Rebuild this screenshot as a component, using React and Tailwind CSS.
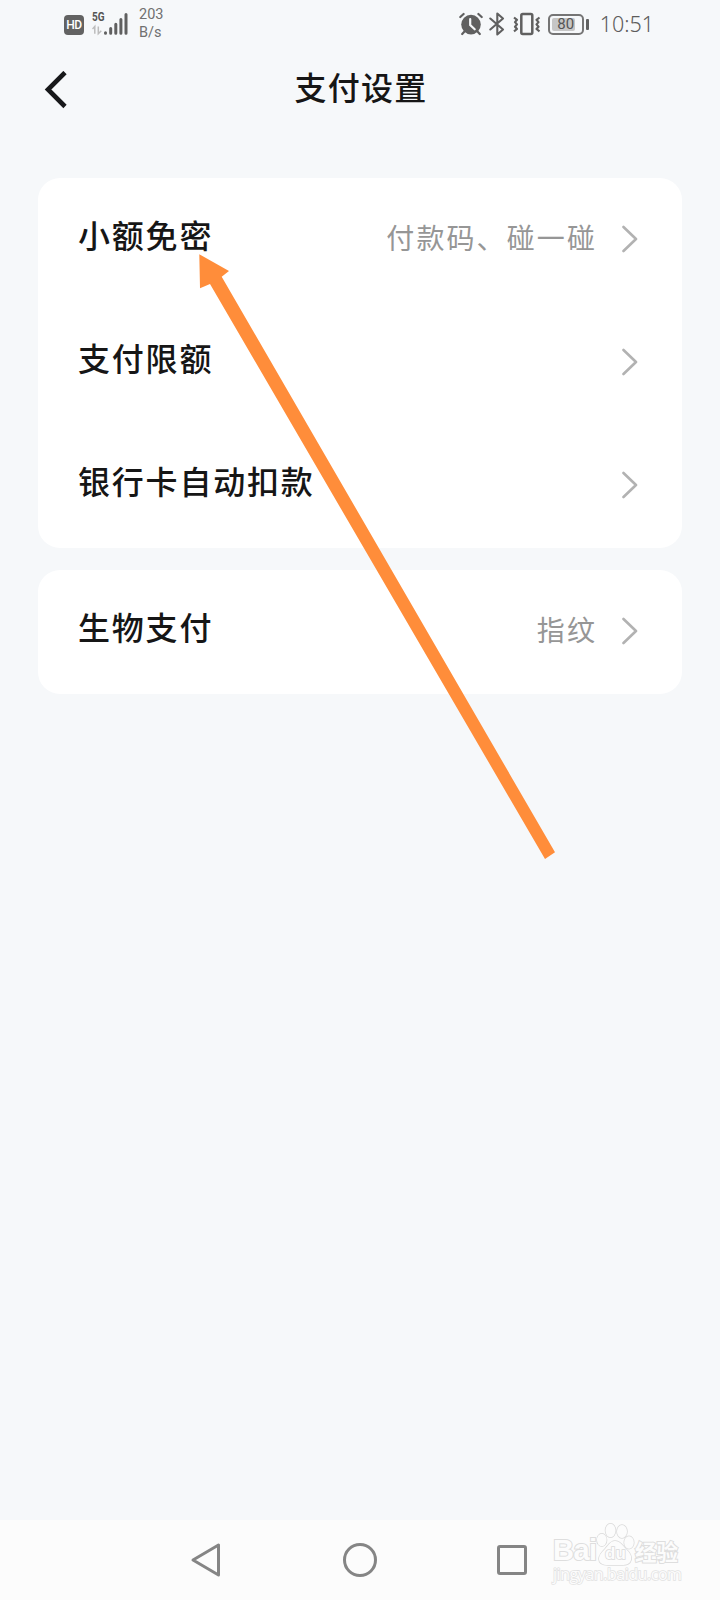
const sections = [
  [
    { label: '小额免密', value: '付款码、碰一碰' },
    { label: '支付限额' },
    { label: '银行卡自动扣款' },
  ],
  [{ label: '生物支付', value: '指纹' }],
];

const SignalIcon = () => (
  <div className="ml-2 flex h-[26px] w-[36px] flex-col">
    <span className="h-[12px] origin-left scale-x-[0.8] font-['Roboto',sans-serif] text-[12.5px] font-bold leading-[12px] text-[#555]">5G</span>
    <svg width="36" height="24" viewBox="0 0 36 24" className="-mt-[11px]" fill="none">
      <path d="M0.5 17l2.3-2.6v7.4M6.3 14.4v7.4l3-3" stroke="#bdbdbd" strokeWidth="1.5" />
      <path d="M13.5 20.8v.4M18.7 16.5v4.7M23.8 12.2v9M28.9 7.5v13.7M34 2.5v18.7" stroke="#606060" strokeWidth="3" strokeLinecap="round" />
    </svg>
  </div>
);

const AlarmIcon = () => (
  <svg width="24" height="24" viewBox="0 0 24 24" fill="none">
    <circle cx="12" cy="12.6" r="9.8" fill="#606060" />
    <path d="M1.3 5L4.600 2M22.700 5l-3.300-3M5.500 19.500l-2.300 2.500M18.500 19.500l2.300 2.500" stroke="#606060" strokeWidth="2.2" strokeLinecap="round" />
    <path d="M11.200 7v6l4.500 4.300" stroke="#f6f8fa" strokeWidth="2.200" strokeLinecap="round" />
  </svg>
);

const BluetoothIcon = () => (
  <svg width="16" height="24" viewBox="0 0 16 24" className="ml-1.5" fill="none" stroke="#606060" strokeWidth="2.100" strokeLinejoin="round" strokeLinecap="round">
    <path d="M1.300 6.500L14 17.500 8.300 22.500V1.500L14 6.500 1.300 17.500" />
  </svg>
);

const VibrateIcon = () => (
  <svg width="28" height="24" viewBox="0 0 28 24" className="ml-2" fill="none" stroke="#606060" strokeLinejoin="round">
    <rect x="8.300" y="2" width="11" height="20" rx="1.500" strokeWidth="2.500" />
    <path d="M1 5.500l3 2.300-2 2.300 2 2.300-2 2.300 2 2.300-3 2.300M26.500 5.500l-3 2.300 2 2.300-2 2.300 2 2.300-2 2.300 3 2.300" strokeWidth="2.200" />
  </svg>
);

const Battery = () => (
  <div className="ml-[7px] flex items-center">
    <div className="relative flex h-[21px] w-[36px] items-center justify-center rounded-[5px] border-2 border-[#757575]">
      <div className="absolute left-[2px] top-[2px] h-[13px] w-[23px] rounded-[2px] bg-[#c6c6c6]" />
      <span className="relative font-['Roboto',sans-serif] text-[15px] leading-none text-[#555]">80</span>
    </div>
    <div className="ml-[2px] h-[11px] w-[3px] rounded-[1px] bg-[#606060]" />
  </div>
);

const StatusBar = () => (
  <div className="flex h-12 items-center justify-between pl-16 pr-[66px]">
    <div className="flex items-center">
      <div className="mt-0.5 flex h-5 w-5 items-center justify-center rounded-[4px] bg-[#626262] font-['Roboto',sans-serif] text-xs font-medium leading-none tracking-tight text-white">
        HD
      </div>
      <SignalIcon />
      <div className="ml-[11px] font-['Roboto',sans-serif] text-[14.500px] leading-[18px] text-[#707070]">
        <p>203</p>
        <p>B/s</p>
      </div>
    </div>
    <div className="flex items-center">
      <AlarmIcon />
      <BluetoothIcon />
      <VibrateIcon />
      <Battery />
      <span className="ml-[11px] font-['Noto_Sans',sans-serif] text-[21.500px] font-light leading-none text-[#5c5c5c]">10:51</span>
    </div>
  </div>
);

const Row = ({ label, value }) => (
  <div className="flex h-[123px] items-center pl-10 pr-[44px]">
    <span className="mb-[5px] flex-1 font-['Liberation_Sans','Noto_Sans_CJK_SC',sans-serif] text-[32px] font-medium leading-none tracking-[1.800px] text-[#161616]">
      {label}
    </span>
    {value && (
      <span className="mr-[25px] font-['Liberation_Sans','Noto_Sans_CJK_SC',sans-serif] text-[28px] leading-none tracking-[2.100px] text-[#969696]">
        {value}
      </span>
    )}
    <svg width="16" height="28" viewBox="0 0 16 28" className="mb-0.5" fill="none" stroke="#b2b2b2" strokeWidth="2.600" strokeLinecap="round" strokeLinejoin="round">
      <path d="M1.500 2L14 14 1.500 26" />
    </svg>
  </div>
);

const Watermark = () => (
  <div className="absolute left-[553px] top-0 w-[132px] text-[#fcfcfc] [paint-order:stroke_fill]">
    <div className="flex h-[46px] items-end">
      <span className="w-[43px] font-['Liberation_Sans',sans-serif] text-[29px] font-bold leading-[32px] tracking-[-0.500px] [-webkit-text-stroke:2px_#dedede]">Bai</span>
      <div className="relative h-[44px] w-[39px]">
        <svg width="39" height="44" viewBox="0 0 39 44" fill="#fcfcfc" stroke="#dadada" strokeWidth="1.500">
          <ellipse cx="14.500" cy="8.500" rx="5" ry="6.800" />
          <ellipse cx="26" cy="9.500" rx="5" ry="6.500" />
          <ellipse cx="5.800" cy="18" rx="4.800" ry="6.200" />
          <ellipse cx="33" cy="20.500" rx="4.800" ry="6.200" />
          <path d="M19 19c5 0 7 4 11 8s6 7 5 11-5 5-9 5H12c-5 0-9-2-9-6s3-7 6-10 5-8 10-8z" />
        </svg>
        <span className="absolute left-[9px] top-[23px] font-['Liberation_Sans',sans-serif] text-[17px] font-bold leading-[18px] [-webkit-text-stroke:1.500px_#dadada]">du</span>
      </div>
      <span className="mb-0.5 font-['Noto_Sans_CJK_SC',sans-serif] text-[21.500px] font-bold leading-[27px] [-webkit-text-stroke:2px_#dedede]">经验</span>
    </div>
    <p className="font-['Open_Sans',sans-serif] text-[16px] leading-[17px] tracking-[-0.450px] [-webkit-text-stroke:1.500px_#e2e2e2]">jingyan.baidu.com</p>
  </div>
);

const NavBar = () => (
  <div className="relative flex h-20 items-center bg-[#fcfcfc] pl-[190px]">
    <svg width="32" height="36" viewBox="0 0 32 36" fill="none" stroke="#858585" strokeWidth="3" strokeLinejoin="round">
      <path d="M28.500 3v30L3 18z" />
    </svg>
    <div className="ml-[121px] h-[34px] w-[34px] rounded-full border-[3px] border-[#858585]" />
    <div className="ml-[120px] h-[30px] w-[30px] rounded-[3px] border-[3px] border-[#858585]" />
    <Watermark />
  </div>
);

// Orange pointer drawn over the list
const Pointer = () => (
  <svg width="360" height="610" viewBox="198 252 360 610" className="pointer-events-none absolute left-[198px] top-[252px]">
    <path d="M199.300 254.300L229 271l-7.300 5.700L555 852.300 545 859 210 284l-10 4.300z" fill="#ff8d3a" />
  </svg>
);

export default function App() {
  return (
    <div className="relative flex h-[1600px] w-[720px] flex-col overflow-hidden bg-[#f6f8fa]">
      <StatusBar />
      <header className="relative flex h-[82px] items-center justify-center">
        <svg width="24" height="38" viewBox="0 0 24 38" className="absolute left-[44px] top-[23px]" fill="none" stroke="#17181a" strokeWidth="4.600">
          <path d="M21 1.500L4 18.500 21 35.500" />
        </svg>
        <h1 className="pl-0.5 font-['Liberation_Sans','Noto_Sans_CJK_SC',sans-serif] text-[32px] font-medium leading-none tracking-[1.300px] text-[#161616]">支付设置</h1>
      </header>
      <main className="mt-12 flex flex-1 flex-col gap-[22px] px-[38px]">
        {sections.map((rows, i) => (
          <section key={i} className="rounded-[22px] bg-white pb-px">
            {rows.map(row => <Row key={row.label} {...row} />)}
          </section>
        ))}
      </main>
      <NavBar />
      <Pointer />
    </div>
  );
}
